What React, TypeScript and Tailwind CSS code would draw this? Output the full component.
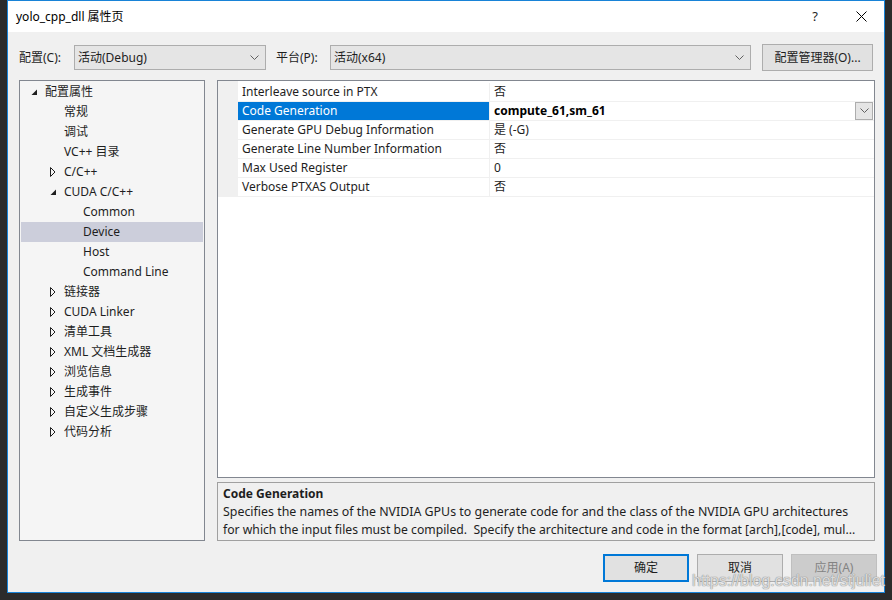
import React from "react";

const font = { fontFamily: '"Noto Sans", "Noto Sans CJK SC", sans-serif' };

type Node = { label: string; level: 0 | 1 | 2; state?: "open" | "closed"; selected?: boolean };

const tree: Node[] = [
  { label: "配置属性", level: 0, state: "open" },
  { label: "常规", level: 1 },
  { label: "调试", level: 1 },
  { label: "VC++ 目录", level: 1 },
  { label: "C/C++", level: 1, state: "closed" },
  { label: "CUDA C/C++", level: 1, state: "open" },
  { label: "Common", level: 2 },
  { label: "Device", level: 2, selected: true },
  { label: "Host", level: 2 },
  { label: "Command Line", level: 2 },
  { label: "链接器", level: 1, state: "closed" },
  { label: "CUDA Linker", level: 1, state: "closed" },
  { label: "清单工具", level: 1, state: "closed" },
  { label: "XML 文档生成器", level: 1, state: "closed" },
  { label: "浏览信息", level: 1, state: "closed" },
  { label: "生成事件", level: 1, state: "closed" },
  { label: "自定义生成步骤", level: 1, state: "closed" },
  { label: "代码分析", level: 1, state: "closed" },
];

const props = [
  { name: "Interleave source in PTX", value: "否" },
  { name: "Code Generation", value: "compute_61,sm_61", selected: true },
  { name: "Generate GPU Debug Information", value: "是 (-G)" },
  { name: "Generate Line Number Information", value: "否" },
  { name: "Max Used Register", value: "0" },
  { name: "Verbose PTXAS Output", value: "否" },
];

function Chevron() {
  return (
    <svg width="9" height="6" viewBox="0 0 9 6" fill="none" stroke="#606060" strokeWidth="1">
      <path d="M0.5 0.5 L4.5 4.5 L8.5 0.5" />
    </svg>
  );
}

function Expander({ state }: { state?: "open" | "closed" }) {
  if (state === "open")
    return (
      <svg width="7" height="7" viewBox="0 0 7 7">
        <path d="M6 0.5 L6 6 L0.5 6 Z" fill="#1e1e1e" />
      </svg>
    );
  if (state === "closed")
    return (
      <svg width="6" height="10" viewBox="0 0 6 10" fill="none" stroke="#1e1e1e" strokeWidth="1">
        <path d="M0.5 0.5 L5 5 L0.5 9.5 Z" />
      </svg>
    );
  return null;
}

function Combo({ text, width }: { text: string; width: string }) {
  return (
    <div className={`${width} h-[25px] bg-[#e5e5e5] border border-[#adadad] flex items-center justify-between pl-[3px] pr-[6px]`}>
      <span>{text}</span>
      <Chevron />
    </div>
  );
}

function Button({ label, primary, disabled }: { label: string; primary?: boolean; disabled?: boolean }) {
  return (
    <div
      className={`w-[86px] h-[28px] flex items-center justify-center ${
        primary ? "border-2 border-[#0078d7] bg-[#e1e1e1]" : disabled ? "border border-[#bfbfbf] bg-[#cccccc] text-[#838383]" : "border border-[#adadad] bg-[#e1e1e1]"
      }`}
    >
      {label}
    </div>
  );
}

export default function App() {
  return (
    <div className="w-[892px] h-[600px] bg-[#2b2b2b] pl-[7px] text-[12px] text-[#1e1e1e]" style={font}>
      <div className="relative w-[878px] h-[593px] border border-[#1883d7] flex flex-col bg-[#f0f0f0]">
        {/* title bar */}
        <div className="h-[31px] bg-white flex items-center pl-[8px]">
          <span className="flex-1 text-[#000]">yolo_cpp_dll 属性页</span>
          <span className="w-[46px] text-center text-[13px]">?</span>
          <span className="w-[46px] flex justify-center">
            <svg width="11" height="11" viewBox="0 0 11 11" stroke="#000" strokeWidth="1">
              <path d="M0.5 0.5 L10.5 10.5 M10.5 0.5 L0.5 10.5" />
            </svg>
          </span>
        </div>

        {/* config row */}
        <div className="flex items-center h-[27px] mt-[12px] pl-[11px]">
          <span className="w-[55px]">配置(C):</span>
          <Combo text="活动(Debug)" width="w-[192px]" />
          <span className="ml-[10px] w-[54px]">平台(P):</span>
          <Combo text="活动(x64)" width="w-[421px]" />
          <div className="ml-[11px] w-[111px] h-[27px] border border-[#adadad] bg-[#e1e1e1] flex items-center justify-center">
            配置管理器(O)...
          </div>
        </div>

        {/* main */}
        <div className="flex mt-[9px] pl-[11px] h-[461px]">
          <div className="w-[186px] border border-[#828790] bg-[#f5f5f5] py-[1px] px-[1px]">
            {tree.map((n, i) => (
              <div key={i} className={`h-[20px] flex items-center ${n.selected ? "bg-[#cccedb]" : ""}`}>
                <span
                  className={`flex items-center justify-center w-[10px] ${
                    n.level === 0 ? "ml-[8px]" : n.level === 1 ? "ml-[27px]" : "ml-[46px]"
                  }`}
                >
                  <Expander state={n.state} />
                </span>
                <span className="ml-[6px] whitespace-nowrap">{n.label}</span>
              </div>
            ))}
          </div>

          <div className="ml-[12px] w-[658px] flex flex-col">
            <div className="h-[398px] border border-[#828790] bg-white">
              <div className="h-[2px] w-[20px] bg-[#f0f0f0]" />
              {props.map((p, i) => (
                <div key={i} className="flex h-[19px] border-b border-[#f0f0f0]">
                  <div className="w-[20px] bg-[#f0f0f0]" />
                  <div
                    className={`w-[252px] border-r border-[#f0f0f0] pl-[4px] flex items-center whitespace-nowrap ${
                      p.selected ? "bg-[#0078d7] text-white" : ""
                    }`}
                  >
                    {p.name}
                  </div>
                  <div className={`flex-1 flex items-center pl-[4px] ${p.selected ? "font-bold text-black" : ""}`}>
                    <span className="flex-1">{p.value}</span>
                    {p.selected && (
                      <div className="w-[18px] h-[18px] mr-[1px] bg-[#e5e5e5] border border-[#adadad] flex items-center justify-center">
                        <Chevron />
                      </div>
                    )}
                  </div>
                </div>
              ))}
            </div>
            <div className="mt-[4px] h-[59px] border border-[#a0a0a0] bg-[#f0f0f0] px-[5px] pt-[2px] leading-[18px]">
              <div className="font-bold">Code Generation</div>
              <div className="text-[12.4px] whitespace-nowrap">
                Specifies the names of the NVIDIA GPUs to generate code for and the class of the NVIDIA GPU architectures
              </div>
              <div className="text-[12.2px] whitespace-nowrap">
                for which the input files must be compiled.&nbsp; Specify the architecture and code in the format [arch],[code], mul...
              </div>
            </div>
          </div>
        </div>

        {/* buttons */}
        <div className="flex justify-end gap-[8px] mt-[13px] pr-[7px]">
          <Button label="确定" primary />
          <Button label="取消" />
          <Button label="应用(A)" disabled />
        </div>

        <div
          className="absolute left-[684px] top-[568px] text-[16px] text-white/70 whitespace-nowrap pointer-events-none"
          style={{ textShadow: "0 0 1px #888, 0 0 1px #888", fontFamily: '"Liberation Sans", sans-serif' }}
        >
          https://blog.csdn.net/stjuliet
        </div>
      </div>
    </div>
  );
}
